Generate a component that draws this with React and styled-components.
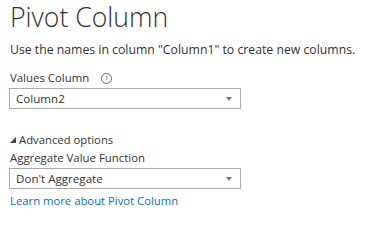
import React from "react";
import styled, { createGlobalStyle } from "styled-components";

const GlobalStyle = createGlobalStyle`
  body {
    margin: 0;
    background: #ffffff;
    font-family: "Open Sans", "Noto Sans", "Liberation Sans", sans-serif;
    color: #333333;
  }
`;

const Dialog = styled.div`
  width: 388px;
  height: 250px;
  padding: 0 0 0 9px;
  box-sizing: border-box;
  display: flex;
  flex-direction: column;
`;

const Title = styled.h1`
  margin: 0;
  padding-left: 1px;
  font-size: 26.6px;
  font-weight: 300;
  line-height: 34px;
  color: #333333;
`;

const Description = styled.p`
  margin: 7px 0 0;
  padding-left: 1px;
  font-size: 12.25px;
  line-height: 18px;
  color: #333333;
`;

const Label = styled.div`
  margin-top: ${(p) => p.$top || 0}px;
  padding-left: 1px;
  display: flex;
  align-items: center;
  gap: 12px;
  font-size: 11.4px;
  line-height: 18px;
  color: #333333;
`;

const InfoIcon = styled.span`
  width: 9px;
  height: 9px;
  border: 1px solid #666666;
  border-radius: 50%;
  display: inline-flex;
  align-items: center;
  justify-content: center;
  font-size: 7px;
  line-height: 1;
  color: #666666;
  font-family: "DejaVu Serif", serif;
`;

const Select = styled.div`
  margin-top: 1px;
  width: 232px;
  height: 21px;
  box-sizing: border-box;
  border: 1px solid #ababab;
  display: flex;
  align-items: center;
  justify-content: space-between;
  padding: 0 8px 0 6px;
  font-size: 11.6px;
  color: #333333;
`;

const Caret = styled.span`
  width: 0;
  height: 0;
  border-left: 3.5px solid transparent;
  border-right: 3.5px solid transparent;
  border-top: 4px solid #777777;
`;

const Toggle = styled.div`
  margin-top: ${(p) => p.$top || 0}px;
  display: flex;
  align-items: center;
  gap: 3px;
  font-size: 11.3px;
  line-height: 18px;
  color: #333333;
`;

const Arrow = styled.svg`
  width: 6px;
  height: 6px;
  margin-left: 1px;
`;

const MoreLink = styled.a`
  margin-top: 4px;
  padding-left: 1px;
  font-size: 11.3px;
  line-height: 16px;
  color: #0072c6;
  text-decoration: none;
`;

export default function App() {
  return (
    <>
      <GlobalStyle />
      <Dialog>
        <Title>Pivot Column</Title>
        <Description>
          Use the names in column "Column1" to create new columns.
        </Description>
        <Label $top={10}>
          Values Column <InfoIcon>i</InfoIcon>
        </Label>
        <Select>
          <span>Column2</span>
          <Caret />
        </Select>
        <Toggle $top={22}>
          <Arrow viewBox="0 0 6 6">
            <polygon points="6,0 6,6 0,6" fill="#444444" />
          </Arrow>
          Advanced options
        </Toggle>
        <Label $top={0}>Aggregate Value Function</Label>
        <Select>
          <span>Don't Aggregate</span>
          <Caret />
        </Select>
        <MoreLink href="#">Learn more about Pivot Column</MoreLink>
      </Dialog>
    </>
  );
}
